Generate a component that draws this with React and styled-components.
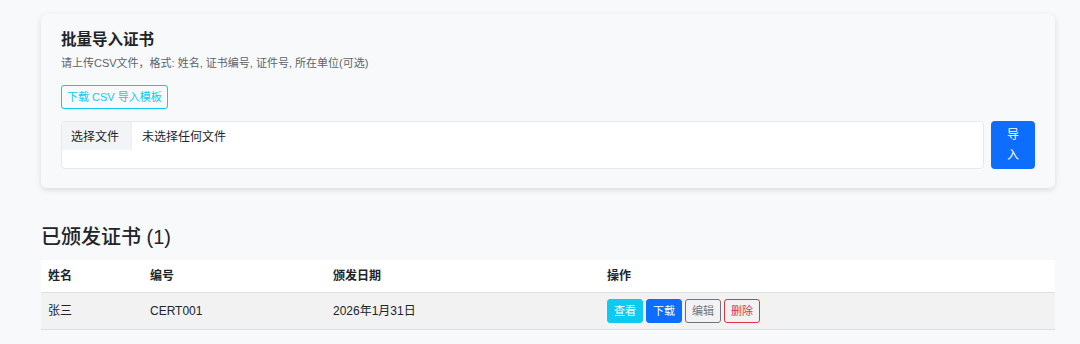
import styled, { createGlobalStyle } from "styled-components";

const GlobalStyle = createGlobalStyle`
  body {
    margin: 0;
    background: #f8f9fa;
    font-family: "Liberation Sans", "Noto Sans CJK SC", sans-serif;
    color: #212529;
  }
`;

const Page = styled.div`
  padding: 14px 25px 0 41px;
`;

const Card = styled.section`
  background: #f8f9fa;
  border-radius: 6px;
  box-shadow: 0 2px 6px rgba(0, 0, 0, 0.12);
  padding: 17px 20px 19px;
`;

const Title = styled.h5`
  margin: 0;
  font-size: 15.5px;
  line-height: 18px;
  font-weight: 700;
`;

const Hint = styled.p`
  margin: 6px 0 0;
  font-size: 11px;
  line-height: 16px;
  color: #5c636a;
`;

const OutlineButton = styled.button`
  margin-top: 14px;
  font-family: inherit;
  font-size: 11px;
  line-height: 16px;
  padding: 3px 5px;
  color: #0dcaf0;
  background: transparent;
  border: 1px solid #0dcaf0;
  border-radius: 3px;
`;

const UploadRow = styled.div`
  display: flex;
  gap: 7px;
  margin-top: 12px;
`;

const FileBox = styled.div`
  flex: 1;
  height: 48px;
  box-sizing: border-box;
  display: flex;
  align-items: flex-start;
  background: #fff;
  border: 1px solid #e6e8ea;
  border-radius: 4px;
  overflow: hidden;
  font-size: 12px;
`;

const FilePick = styled.span`
  height: 28px;
  line-height: 30px;
  padding: 0 12px 0 9px;
  background: #f3f4f5;
  border-right: 1px solid #eceef0;
  color: #212529;
`;

const FileName = styled.span`
  line-height: 30px;
  padding-left: 10px;
  color: #212529;
`;

const ImportButton = styled.button`
  width: 44px;
  height: 48px;
  padding: 4px 12px;
  font-family: inherit;
  font-size: 12px;
  line-height: 20px;
  color: #fff;
  background: #0d6efd;
  border: none;
  border-radius: 4px;
`;

const Heading = styled.h4`
  margin: 37px 0 0;
  font-size: 20px;
  line-height: 24px;
  font-weight: 500;
`;

const Table = styled.table`
  margin-top: 11px;
  width: 100%;
  border-collapse: collapse;
  table-layout: fixed;
  font-size: 12px;
`;

const Th = styled.th`
  width: ${(p) => p.$w || "auto"};
  text-align: left;
  font-weight: 700;
  padding: 8px 7px;
  line-height: 16px;
  background: #fff;
  border-bottom: 1px solid #dee2e6;
`;

const Td = styled.td`
  padding: 6px 7px;
  line-height: 24px;
  background: #f2f2f2;
  border-bottom: 1px solid #dee2e6;
  color: #212529;
`;

const Actions = styled.div`
  display: flex;
  gap: 3px;
`;

const colors = {
  info: { bg: "#0dcaf0", fg: "#fff", bd: "#0dcaf0" },
  primary: { bg: "#0d6efd", fg: "#fff", bd: "#0d6efd" },
  secondary: { bg: "transparent", fg: "#6c757d", bd: "#6c757d" },
  danger: { bg: "transparent", fg: "#dc3545", bd: "#dc3545" },
};

const SmallButton = styled.button`
  font-family: inherit;
  font-size: 11px;
  line-height: 16px;
  padding: 3px 6px;
  border-radius: 3px;
  color: ${(p) => colors[p.$kind].fg};
  background: ${(p) => colors[p.$kind].bg};
  border: 1px solid ${(p) => colors[p.$kind].bd};
`;

export default function App() {
  return (
    <>
      <GlobalStyle />
      <Page>
        <Card>
          <Title>批量导入证书</Title>
          <Hint>请上传CSV文件，格式: 姓名, 证书编号, 证件号, 所在单位(可选)</Hint>
          <OutlineButton>下载 CSV 导入模板</OutlineButton>
          <UploadRow>
            <FileBox>
              <FilePick>选择文件</FilePick>
              <FileName>未选择任何文件</FileName>
            </FileBox>
            <ImportButton>导入</ImportButton>
          </UploadRow>
        </Card>

        <Heading>已颁发证书 (1)</Heading>
        <Table>
          <thead>
            <tr>
              <Th $w="88px">姓名</Th>
              <Th $w="169px">编号</Th>
              <Th $w="260px">颁发日期</Th>
              <Th>操作</Th>
            </tr>
          </thead>
          <tbody>
            <tr>
              <Td>张三</Td>
              <Td>CERT001</Td>
              <Td>2026年1月31日</Td>
              <Td>
                <Actions>
                  <SmallButton $kind="info">查看</SmallButton>
                  <SmallButton $kind="primary">下载</SmallButton>
                  <SmallButton $kind="secondary">编辑</SmallButton>
                  <SmallButton $kind="danger">删除</SmallButton>
                </Actions>
              </Td>
            </tr>
          </tbody>
        </Table>
      </Page>
    </>
  );
}
